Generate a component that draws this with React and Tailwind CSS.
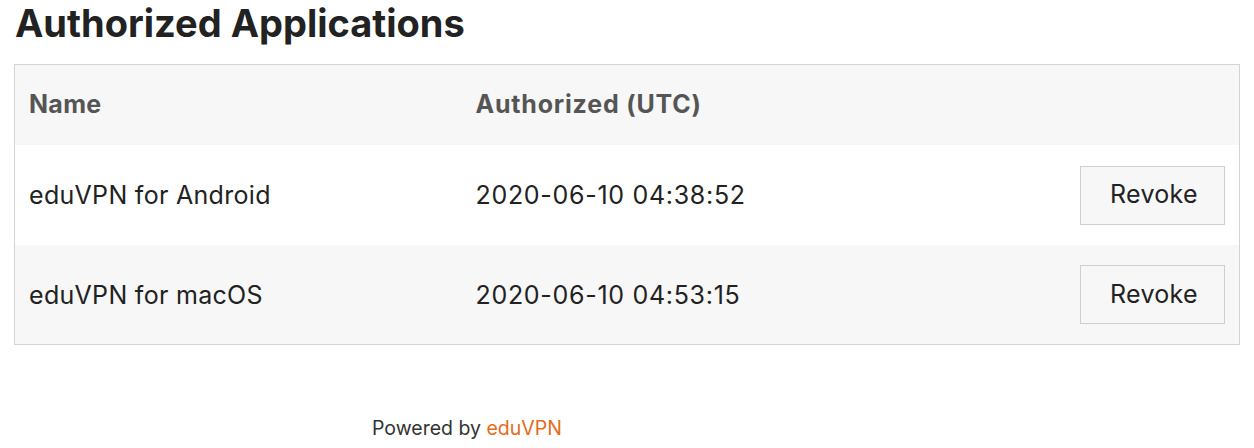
import React from 'react';

const apps = [
    { name: 'eduVPN for Android', authorized: '2020-06-10 04:38:52' },
    { name: 'eduVPN for macOS', authorized: '2020-06-10 04:53:15' },
];

const App = () => {
    return (
        <div className="min-h-screen bg-white text-[#222] font-['Inter','Liberation_Sans',sans-serif]">
            <div className="px-[14px] pt-[1px]">
                <h1 className="m-0 pl-[1px] text-[38px] leading-[44px] font-bold text-[#222]">Authorized Applications</h1>

                {/* applications table */}
                <table className="mt-[19px] w-full border border-[#d4d4d4] border-collapse text-[25px] tracking-[0.3px]">
                    <thead>
                        <tr className="bg-[#f7f7f7] h-[80px]">
                            <th className="w-[447px] pl-[14px] pr-4 text-left font-bold text-[#555]">Name</th>
                            <th className="pl-[14px] pr-4 text-left font-bold text-[#555] tracking-[0.8px]">Authorized (UTC)</th>
                            <th className="px-4"></th>
                        </tr>
                    </thead>
                    <tbody>
                        {apps.map((app, i) => (
                            <tr key={app.name} className={`h-[100px] ${i % 2 === 1 ? 'bg-[#f7f7f7]' : 'bg-white'}`}>
                                <td className="pl-[14px] pr-4 pt-[2px]">{app.name}</td>
                                <td className="pl-[14px] pr-4 pt-[2px] tracking-[0.7px]">{app.authorized}</td>
                                <td className="pl-4 pr-[14px] pt-[1px] text-right">
                                    <button className="h-[59px] w-[145px] pl-[3px] bg-[#f7f7f7] border border-[#cfcfcf] text-[#222] text-[25px] tracking-[0.3px]">Revoke</button>
                                </td>
                            </tr>
                        ))}
                    </tbody>
                </table>
            </div>

            <footer className="mt-[69px] pl-[372px] text-[19.5px] text-[#333]">
                Powered by <a href="#" className="text-[#e36c1c]">eduVPN</a>
            </footer>
        </div>
    );
};

export default App;
